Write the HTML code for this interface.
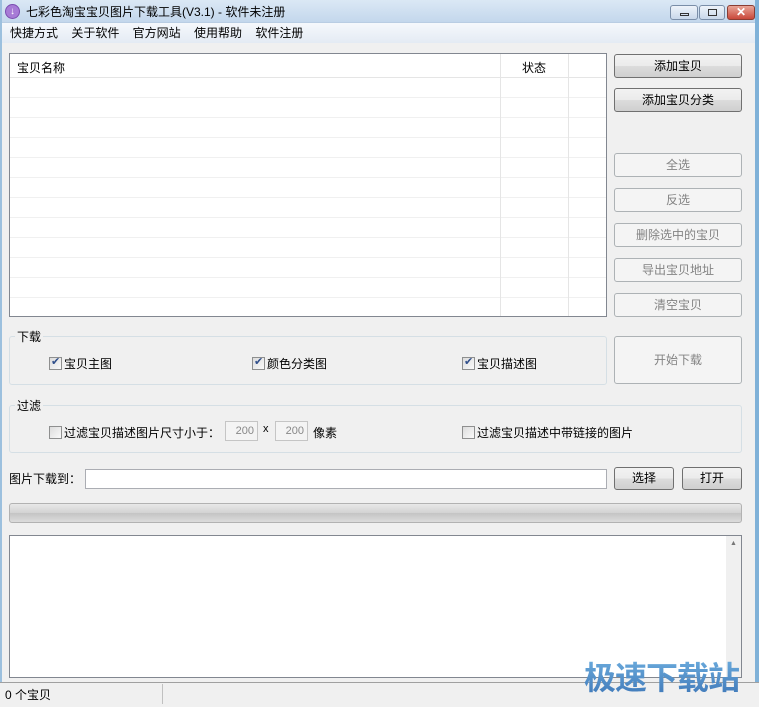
<!DOCTYPE html>
<html><head><meta charset="utf-8"><style>
*{box-sizing:border-box;margin:0;padding:0}
body{width:759px;height:707px;overflow:hidden;background:#f0f0f0;font-family:"Liberation Sans","Noto Sans CJK SC",sans-serif;font-size:12px;color:#000;position:relative}
.a{position:absolute}
.title{left:0;top:0;width:759px;height:23px;background:linear-gradient(#dbe8f5,#c3d7ec);border-bottom:1px solid #b9cde3}
.menu{left:0;top:23px;width:759px;height:20px;background:linear-gradient(#f5f8fc,#e4ebf4)}
.btn{position:absolute;border:1px solid #707070;border-radius:3px;background:linear-gradient(#f2f2f2 0,#ebebeb 50%,#dcdcdc 51%,#cfcfcf 100%);text-align:center;font-size:12px}
.dis{border-color:#adb2b5;background:#f4f4f4;color:#838383}
.grp{position:absolute;border:1px solid #d5dfe5;border-radius:3px}
.lbl{position:absolute;background:#f0f0f0;padding:0 2px}
.cb{position:absolute;width:13px;height:13px;border:1px solid #8e8f8f;background:linear-gradient(135deg,#dcdcdc,#fafafa)}
.cb.c::after{content:"✔";position:absolute;left:1px;top:-3px;font-size:11px;color:#2f4e8a}
</style></head><body>
<div class="a title"></div>
<div class="a" style="left:5px;top:4px;width:15px;height:15px;border-radius:50%;background:#a77bd6;border:1px solid #7b4db0;color:#fff;font-size:10px;line-height:13px;text-align:center">↓</div>
<div class="a" style="left:26px;top:3px;font-size:12px">七彩色淘宝宝贝图片下载工具(V3.1) - 软件未注册</div>
<div class="a" style="left:670px;top:5px;width:28px;height:15px;border:1px solid #7a8ea8;border-radius:3px;background:linear-gradient(#eef3fa,#c9d8ea)"><div class="a" style="left:9px;top:7px;width:9px;height:3px;border:1px solid #333"></div></div>
<div class="a" style="left:699px;top:5px;width:26px;height:15px;border:1px solid #7a8ea8;border-radius:3px;background:linear-gradient(#eef3fa,#c9d8ea)"><div class="a" style="left:8px;top:3px;width:9px;height:7px;border:1px solid #333"></div></div>
<div class="a" style="left:727px;top:5px;width:28px;height:15px;border:1px solid #8a3d33;border-radius:3px;background:linear-gradient(#e9a597,#c9483a);color:#fff;font-weight:bold;font-size:12px;line-height:13px;text-align:center">✕</div>
<div class="a menu"></div>
<div class="a" style="left:10px;top:24px">快捷方式&nbsp;&nbsp;&nbsp;&nbsp;关于软件&nbsp;&nbsp;&nbsp;&nbsp;官方网站&nbsp;&nbsp;&nbsp;&nbsp;使用帮助&nbsp;&nbsp;&nbsp;&nbsp;软件注册</div>
<div class="a" style="left:755px;top:0;width:4px;height:707px;background:#7fb1d8"></div>
<div class="a" style="left:0;top:0;width:2px;height:707px;background:#9cc0de"></div>

<div class="a" style="left:9px;top:53px;width:598px;height:264px;border:1px solid #828790;background:#fff;overflow:hidden;
background-image:repeating-linear-gradient(#fff 0,#fff 19px,#f0f0f0 19px,#f0f0f0 20px);background-position:0 24px">
<div class="a" style="left:0;top:0;width:598px;height:24px;background:#fff;border-bottom:1px solid #e5e5e5"></div>
<div class="a" style="left:7px;top:5px">宝贝名称</div>
<div class="a" style="left:512px;top:5px">状态</div>
<div class="a" style="left:490px;top:0;width:1px;height:264px;background:#e5e5e5"></div>
<div class="a" style="left:558px;top:0;width:1px;height:264px;background:#e5e5e5"></div>
</div>

<div class="btn" style="left:614px;top:54px;width:128px;height:24px;line-height:22px">添加宝贝</div>
<div class="btn" style="left:614px;top:88px;width:128px;height:24px;line-height:22px">添加宝贝分类</div>
<div class="btn dis" style="left:614px;top:153px;width:128px;height:24px;line-height:22px">全选</div>
<div class="btn dis" style="left:614px;top:188px;width:128px;height:24px;line-height:22px">反选</div>
<div class="btn dis" style="left:614px;top:223px;width:128px;height:24px;line-height:22px">删除选中的宝贝</div>
<div class="btn dis" style="left:614px;top:258px;width:128px;height:24px;line-height:22px">导出宝贝地址</div>
<div class="btn dis" style="left:614px;top:293px;width:128px;height:24px;line-height:22px">清空宝贝</div>
<div class="btn dis" style="left:614px;top:336px;width:128px;height:48px;line-height:46px">开始下载</div>

<div class="grp" style="left:9px;top:336px;width:598px;height:49px"></div>
<div class="lbl" style="left:15px;top:328px">下载</div>
<div class="cb c" style="left:49px;top:357px"></div><div class="a" style="left:64px;top:355px">宝贝主图</div>
<div class="cb c" style="left:252px;top:357px"></div><div class="a" style="left:267px;top:355px">颜色分类图</div>
<div class="cb c" style="left:462px;top:357px"></div><div class="a" style="left:477px;top:355px">宝贝描述图</div>

<div class="grp" style="left:9px;top:405px;width:733px;height:48px"></div>
<div class="lbl" style="left:15px;top:397px">过滤</div>
<div class="cb" style="left:49px;top:426px"></div><div class="a" style="left:64px;top:424px">过滤宝贝描述图片尺寸小于：</div>
<div class="a" style="left:225px;top:421px;width:33px;height:20px;border:1px solid #c5c5c5;background:#f4f4f4;color:#888;font-size:11px;text-align:right;padding-right:3px;line-height:18px">200</div>
<div class="a" style="left:263px;top:423px;font-size:11px">x</div>
<div class="a" style="left:275px;top:421px;width:33px;height:20px;border:1px solid #c5c5c5;background:#f4f4f4;color:#888;font-size:11px;text-align:right;padding-right:3px;line-height:18px">200</div>
<div class="a" style="left:313px;top:424px">像素</div>
<div class="cb" style="left:462px;top:426px"></div><div class="a" style="left:477px;top:424px">过滤宝贝描述中带链接的图片</div>

<div class="a" style="left:9px;top:470px">图片下载到：</div>
<div class="a" style="left:85px;top:469px;width:522px;height:20px;border:1px solid #abadb3;background:#fff"></div>
<div class="btn" style="left:614px;top:467px;width:60px;height:23px;line-height:21px">选择</div>
<div class="btn" style="left:682px;top:467px;width:60px;height:23px;line-height:21px">打开</div>

<div class="a" style="left:9px;top:503px;width:733px;height:20px;border:1px solid #b2b2b2;border-radius:3px;background:linear-gradient(#e8e8e8,#d2d2d2 50%,#c4c4c4 51%,#dcdcdc)"></div>

<div class="a" style="left:9px;top:535px;width:733px;height:143px;border:1px solid #828790;background:#fff"></div>
<div class="a" style="left:726px;top:536px;width:15px;height:141px;background:#f0f0f0"></div>
<div class="a" style="left:730px;top:540px;font-size:7px;color:#777">▲</div>

<div class="a" style="left:0;top:682px;width:759px;height:25px;background:#f0f0f0;border-top:1px solid #a0a0a0"></div>
<div class="a" style="left:5px;top:686px">0 个宝贝</div>
<div class="a" style="left:162px;top:684px;width:1px;height:20px;background:#c0c0c0"></div>
<div class="a" style="left:584px;top:655px;font-size:32px;font-weight:bold;letter-spacing:-1px;background:linear-gradient(#6fb0e0,#3f78b8);-webkit-background-clip:text;color:transparent;font-family:'Noto Sans CJK SC',sans-serif;line-height:42px">极速下载站</div>
</body></html>
